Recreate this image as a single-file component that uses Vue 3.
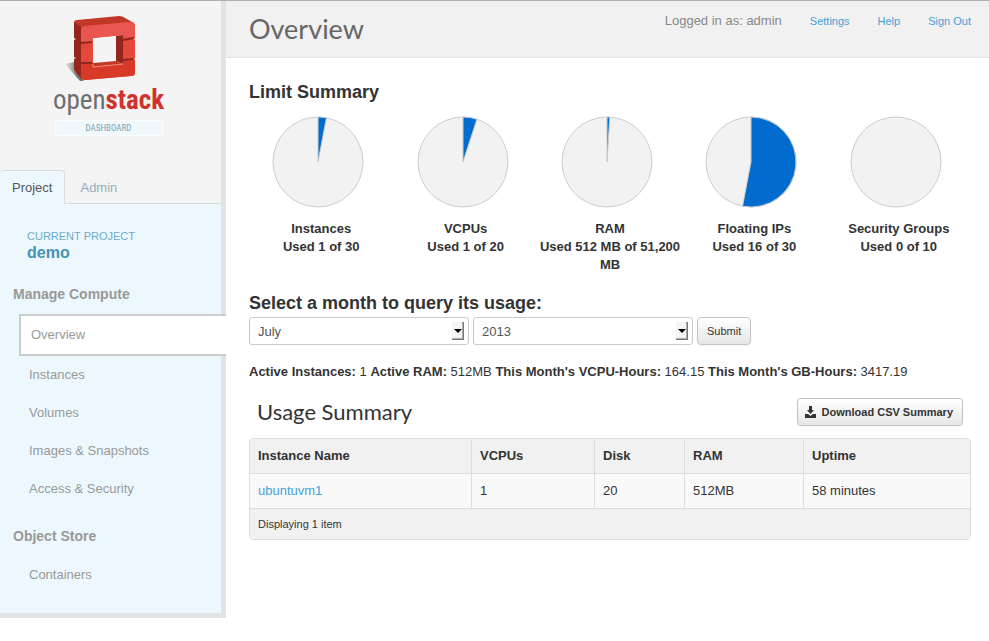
<template>
  <div class="page">
    <aside class="sidebar">
      <a href="#" class="brand" aria-label="OpenStack Dashboard">
        <svg class="brand-cube" width="72" height="66" viewBox="0 0 72 66">
          <defs>
            <linearGradient id="cubeShadow" x1="0" y1="0" x2="1" y2="0">
              <stop offset="0" stop-color="#aaa" stop-opacity="0.2" />
              <stop offset="0.6" stop-color="#777" />
            </linearGradient>
          </defs>
          <path d="M0 48 L9 46 V54 L19 65 H15 Z" fill="url(#cubeShadow)" />
          <path d="M9 7 Q9 4 12 4 L54 0 Q58 0 60 2 L69 7 L64 13 L16 14 Z" fill="#c23827" />
          <path d="M9 6 L17 12 V64 L9 54 V43 L11 42 L9 41 V24 L11 23 L9 22 Z" fill="#93271d" />
          <path
            fill-rule="evenodd"
            d="M16 14 Q16 10 20 10 L65 6 Q70 6 70 10 V57 Q70 60 66 60 L20 64 Q16 64 16 60 Z M28 22 V51 L58 48 V19 Z"
            fill="#e3483a"
          />
          <path d="M16 14 Q16 10 20 10 L65 6 Q70 6 70 10 V21 L58 22 V19 L28 22 V26 L16 27 Z" fill="#e8564f" />
          <path d="M16 48 L28 47 V51 L58 48 V45 L70 43 V57 Q70 60 66 60 L20 64 Q16 64 16 60 Z" fill="#d93a27" />
          <path d="M51 20 L58 19 V48 L51 45 Z" fill="#93271d" />
          <path d="M28 47 L51 45 L58 48 L28 51 Z" fill="#c23827" />
          <path d="M16 27 L27 26 M16 47 L27 47 M58 24 L69 22 M58 44 L69 43" stroke="#93271d" stroke-width="2" />
          <path d="M28 48 V51 L58 48" stroke="#ef8a7c" fill="none" />
          <path d="M68 23 L71 22 V24 Z M68 43 L71 42 V44 Z" fill="#f4f4f4" />
        </svg>
        <span class="brand-name">open<b>stack</b></span>
        <span class="brand-sub">DASHBOARD</span>
      </a>

      <nav class="tabs">
        <a href="#" class="tab active">Project</a>
        <a href="#" class="tab">Admin</a>
      </nav>

      <div class="sidebar-body">
        <div class="current-project">
          <div class="project-label">CURRENT PROJECT</div>
          <div class="project-name">demo</div>
        </div>
        <section v-for="group in groups" :key="group.title" class="nav-group">
          <h4>{{ group.title }}</h4>
          <ul>
            <li v-for="item in group.items" :key="item">
              <a href="#" :class="{ active: item === current }">{{ item }}</a>
            </li>
          </ul>
        </section>
      </div>
    </aside>

    <main class="main">
      <header class="page-header">
        <h1>Overview</h1>
        <div class="user-info">
          <span class="logged-in">Logged in as: admin</span>
          <a href="#">Settings</a>
          <a href="#">Help</a>
          <a href="#">Sign Out</a>
        </div>
      </header>

      <div class="content">
        <h3>Limit Summary</h3>
        <div class="quotas">
          <div v-for="quota in quotas" :key="quota.name" class="quota">
            <svg class="pie" width="92" height="92" viewBox="0 0 92 92">
              <circle cx="46" cy="46" r="45" fill="#f2f2f2" stroke="#ccc" />
              <path v-if="quota.percent" :d="slice(quota.percent)" fill="#006ccf" stroke="#ccc" />
            </svg>
            <strong>{{ quota.name }}</strong>
            <strong>{{ quota.used }}</strong>
          </div>
        </div>

        <form class="usage-form" @submit.prevent>
          <h3>Select a month to query its usage:</h3>
          <div class="form-row">
            <div class="select-box">
              <select v-model="month" aria-label="Month">
                <option v-for="m in months" :key="m">{{ m }}</option>
              </select>
              <span class="select-arrow"></span>
            </div>
            <div class="select-box">
              <select v-model="year" aria-label="Year">
                <option v-for="y in years" :key="y">{{ y }}</option>
              </select>
              <span class="select-arrow"></span>
            </div>
            <button type="submit" class="btn">Submit</button>
          </div>
        </form>

        <p class="usage-line">
          <template v-for="stat in stats" :key="stat.label">
            <strong>{{ stat.label }}:</strong> {{ stat.value + ' ' }}
          </template>
        </p>

        <div class="table-header">
          <h2>Usage Summary</h2>
          <button type="button" class="btn btn-download">
            <svg width="11" height="12" viewBox="0 0 11 12" fill="#333">
              <path d="M4 0 H7 V4 H9 L5.5 8 L2 4 H4 Z" />
              <path d="M0 8 H3 L5.5 10 L8 8 H11 V12 H0 Z" />
            </svg>
            Download CSV Summary
          </button>
        </div>

        <div class="table-wrap">
          <table>
            <colgroup>
              <col class="col-name" />
              <col class="col-vcpus" />
              <col class="col-disk" />
              <col class="col-ram" />
              <col />
            </colgroup>
            <thead>
              <tr>
                <th>Instance Name</th>
                <th>VCPUs</th>
                <th>Disk</th>
                <th>RAM</th>
                <th>Uptime</th>
              </tr>
            </thead>
            <tbody>
              <tr v-for="row in instances" :key="row.name">
                <td><a href="#">{{ row.name }}</a></td>
                <td>{{ row.vcpus }}</td>
                <td>{{ row.disk }}</td>
                <td>{{ row.ram }}</td>
                <td>{{ row.uptime }}</td>
              </tr>
            </tbody>
            <tfoot>
              <tr>
                <td colspan="5">Displaying {{ instances.length }} item</td>
              </tr>
            </tfoot>
          </table>
        </div>
      </div>
    </main>
  </div>
</template>

<script setup>
import { ref } from 'vue'

const current = ref('Overview')
const month = ref('July')
const year = ref('2013')

const months = [
  'January', 'February', 'March', 'April', 'May', 'June',
  'July', 'August', 'September', 'October', 'November', 'December'
]
const years = ['2012', '2013']

const groups = [
  {
    title: 'Manage Compute',
    items: ['Overview', 'Instances', 'Volumes', 'Images & Snapshots', 'Access & Security']
  },
  { title: 'Object Store', items: ['Containers'] }
]

const quotas = [
  { name: 'Instances', used: 'Used 1 of 30', percent: 3 },
  { name: 'VCPUs', used: 'Used 1 of 20', percent: 5 },
  { name: 'RAM', used: 'Used 512 MB of 51,200 MB', percent: 1 },
  { name: 'Floating IPs', used: 'Used 16 of 30', percent: 53 },
  { name: 'Security Groups', used: 'Used 0 of 10', percent: 0 }
]

const stats = [
  { label: 'Active Instances', value: '1' },
  { label: 'Active RAM', value: '512MB' },
  { label: "This Month's VCPU-Hours", value: '164.15' },
  { label: "This Month's GB-Hours", value: '3417.19' }
]

const instances = [
  { name: 'ubuntuvm1', vcpus: 1, disk: 20, ram: '512MB', uptime: '58 minutes' }
]

// pie slice, clockwise from twelve o'clock
function slice(percent) {
  const angle = (percent / 100) * 2 * Math.PI
  const x = 46 + 45 * Math.sin(angle)
  const y = 46 - 45 * Math.cos(angle)
  return `M46 46 V1 A45 45 0 ${percent > 50 ? 1 : 0} 1 ${x} ${y} Z`
}
</script>

<style>
body {
  margin: 0;
  background: #fff;
}
</style>

<style scoped>
.page {
  display: flex;
  align-items: flex-start;
  border-top: 1px solid #b3aca7;
  font-family: "Liberation Sans", Arial, sans-serif;
  font-size: 13px;
  line-height: 18px;
  color: #333;
}

a {
  color: #43a1d6;
  text-decoration: none;
}

h1,
h2,
h3,
h4,
p,
ul {
  margin: 0;
  padding: 0;
  list-style: none;
}

/* Sidebar */
.sidebar {
  flex: none;
  box-sizing: border-box;
  width: 226px;
  background: #f4f4f4;
  border-right: 5px solid #e3e3e3;
  border-bottom: 5px solid #e3e3e3;
}

.brand {
  display: flex;
  flex-direction: column;
  align-items: center;
  padding: 15px 4px 34px 0;
}

.brand-cube {
  margin-right: 16px;
}

.brand-name {
  font-family: "Roboto Condensed", "Open Sans Condensed", sans-serif;
  font-size: 27px;
  line-height: 36px;
  padding-bottom: 2px;
  color: #6d6e70;
}

.brand-name b {
  color: #d0332d;
}

.brand-sub {
  box-sizing: border-box;
  width: 108px;
  border: 1px solid #fafcfd;
  background: #f0f8fb;
  text-align: center;
  font-family: "Roboto Condensed", "Open Sans Condensed", sans-serif;
  font-size: 9px;
  line-height: 14px;
  color: #7ea3b3;
}

.tabs {
  display: flex;
  height: 34px;
  box-sizing: border-box;
  border-bottom: 1px solid #d9dcde;
}

.tab {
  box-sizing: border-box;
  height: 34px;
  padding: 9px 15px 0;
  color: #93adba;
}

.tab.active {
  padding: 8px 12px 0;
  border: 1px solid #d9dcde;
  border-bottom: 0;
  border-left: 0;
  border-radius: 4px 4px 0 0;
  background: #edf8fe;
  color: #555;
}

.sidebar-body {
  padding: 23px 0 19px;
  background: #edf8fe;
}

.current-project {
  padding: 0 27px 19px;
}

.project-label {
  font-size: 11px;
  line-height: 18px;
  color: #6cabc9;
}

.project-name {
  font-size: 16px;
  line-height: 16px;
  font-weight: bold;
  color: #4590b3;
}

.nav-group + .nav-group {
  margin-top: 14px;
}

.nav-group h4 {
  padding: 5px 13px 11px;
  font-size: 14px;
  line-height: 18px;
  color: #999;
}

.nav-group a {
  display: block;
  padding: 10px 10px 10px 29px;
  color: #999;
}

.nav-group a.active {
  margin: 0 -5px 0 19px;
  padding: 10px;
  border: 2px solid #ccc;
  border-right: 0;
  background: #fff;
}

/* Main column */
.main {
  flex: 1;
  min-width: 0;
}

.page-header {
  display: flex;
  justify-content: space-between;
  padding: 10px 18px 10px 23px;
  border-bottom: 1px solid #e2e2e2;
  background: #f1f1f1;
}

h1,
h2 {
  font-family: Lato, "Open Sans", sans-serif;
  font-weight: 400;
}

h1 {
  font-size: 27px;
  line-height: 36px;
  color: #666;
}

.user-info {
  display: flex;
  gap: 28px;
  font-size: 11px;
  line-height: 20px;
}

.logged-in {
  font-size: 13px;
  color: #888;
}

.content {
  padding: 21px 18px 20px 23px;
}

h3 {
  font-size: 18px;
  line-height: 27px;
}

.quotas {
  display: grid;
  grid-template-columns: repeat(5, 1fr);
  margin-top: 10px;
}

.quota {
  display: flex;
  flex-direction: column;
  align-items: center;
  text-align: center;
}

.pie {
  margin: 0 6px 12px 0;
}

.usage-form {
  margin-top: 16px;
}

.form-row {
  display: flex;
  gap: 4px;
}

.select-box {
  position: relative;
  width: 220px;
}

select {
  appearance: none;
  display: block;
  box-sizing: border-box;
  width: 100%;
  height: 28px;
  padding: 1px 8px 0;
  border: 1px solid #ccc;
  border-radius: 3px;
  background: #fff;
  font: inherit;
  color: #555;
}

.select-arrow {
  position: absolute;
  top: 5px;
  right: 5px;
  box-sizing: border-box;
  width: 12px;
  height: 18px;
  border-right: 1px solid #777;
  border-bottom: 1px solid #777;
  box-shadow: inset -1px -1px 0 #aaa;
  background: #f4f4f4;
  pointer-events: none;
}

.select-arrow::after {
  content: "";
  display: block;
  width: 0;
  margin: 7px 0 0 2px;
  border: 4px solid transparent;
  border-top-color: #000;
  border-bottom: 0;
}

.btn {
  display: flex;
  align-items: center;
  box-sizing: border-box;
  height: 28px;
  padding: 0 9px;
  border: 1px solid #c4c4c4;
  border-radius: 4px;
  background: linear-gradient(#fff, #e6e6e6);
  box-shadow: 0 1px 2px rgba(0, 0, 0, 0.05);
  font-family: inherit;
  font-size: 11px;
  color: #333;
  cursor: pointer;
}

.usage-line {
  margin-top: 18px;
}

.table-header {
  display: flex;
  align-items: center;
  justify-content: space-between;
  margin: 17px 0 12px;
  padding: 0 8px;
}

h2 {
  font-size: 22px;
  line-height: 28px;
}

.btn-download {
  gap: 6px;
  padding: 0 9px 0 7px;
  font-weight: bold;
}

.table-wrap {
  border: 1px solid #ddd;
  border-radius: 4px;
  overflow: hidden;
}

table {
  width: 100%;
  table-layout: fixed;
  border-collapse: separate;
  border-spacing: 0;
}

.col-name {
  width: 221px;
}

.col-vcpus {
  width: 123px;
}

.col-disk {
  width: 90px;
}

.col-ram {
  width: 119px;
}

th,
td {
  padding: 8px;
  text-align: left;
}

th {
  background: #f1f1f1;
}

tbody td {
  border-top: 1px solid #ddd;
  background: #f9f9f9;
}

th + th,
td + td {
  border-left: 1px solid #ddd;
}

tfoot td {
  padding: 6px 8px;
  border-top: 1px solid #ddd;
  background: #f1f1f1;
  font-size: 11px;
}
</style>
